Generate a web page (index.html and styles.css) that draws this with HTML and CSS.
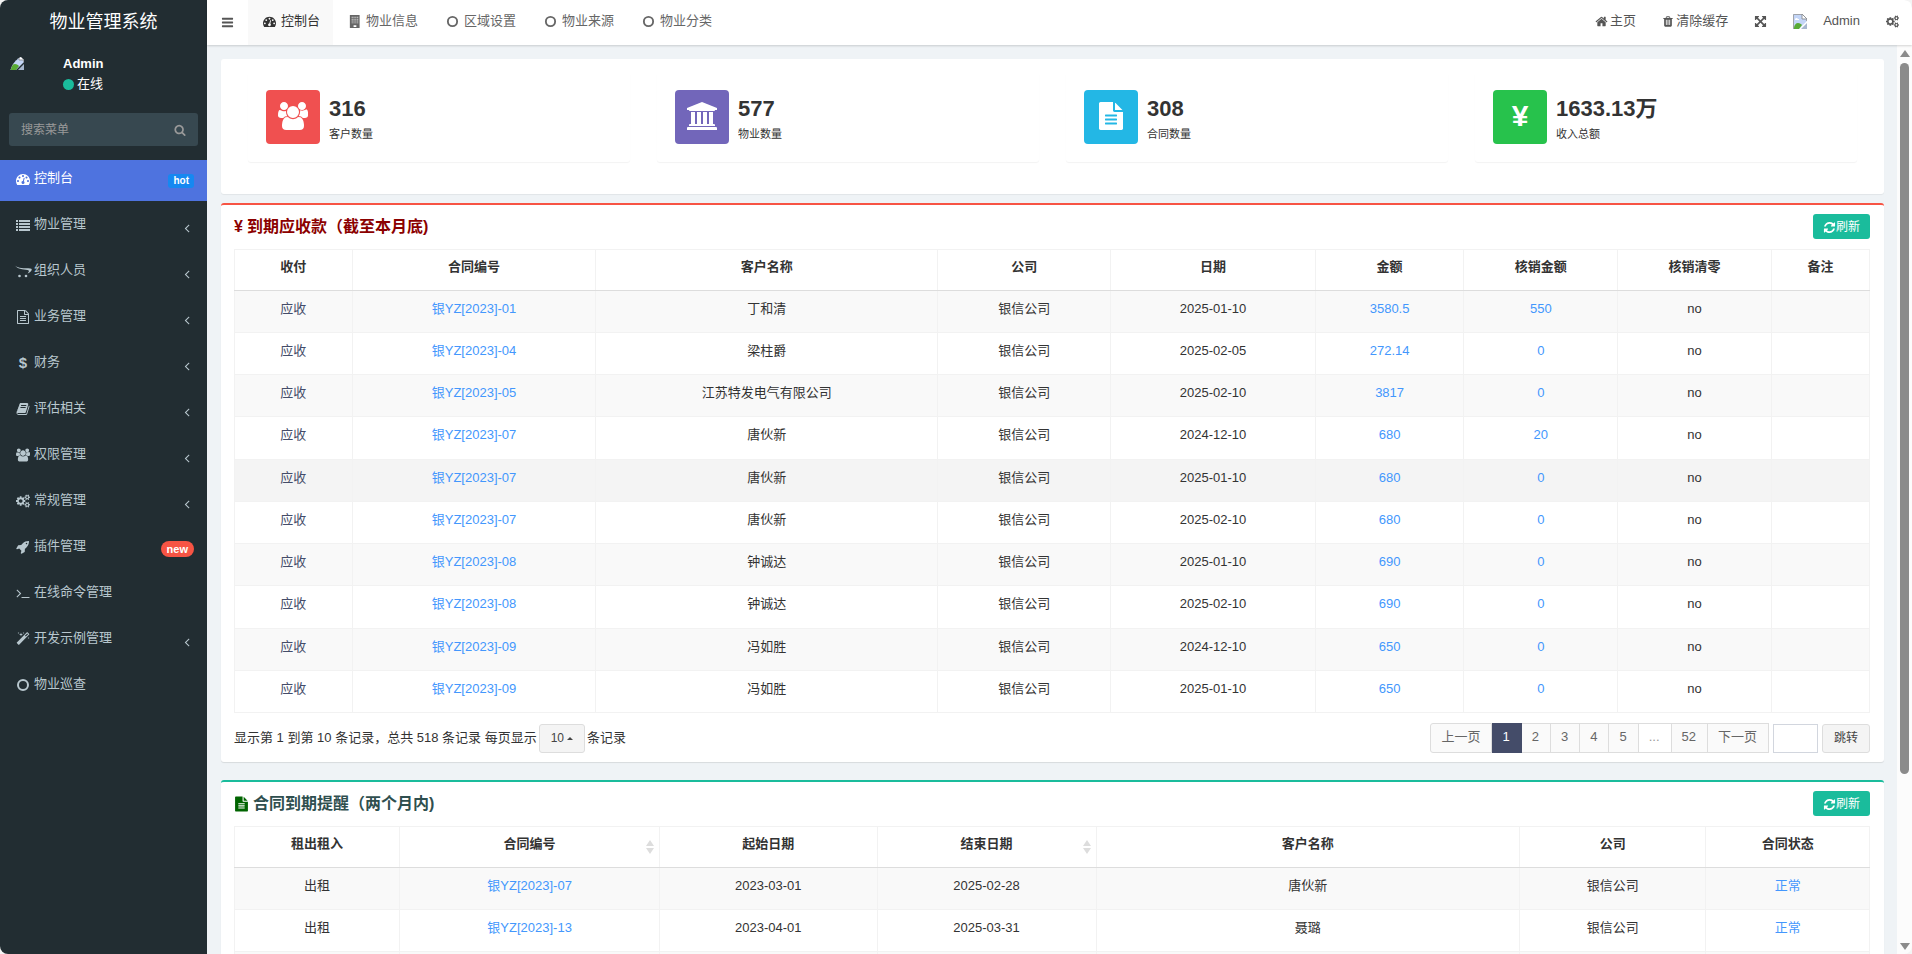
FILE: index.html
```html
<!DOCTYPE html>
<html lang="zh-CN">
<head>
  <meta charset="UTF-8">
  <meta name="viewport" content="width=device-width, initial-scale=1.0">
  <title>物业管理系统</title>
  <link rel="stylesheet" href="styles.css">
</head>
<body>

<svg class="sprite" aria-hidden="true">
  <symbol id="i-bars" viewBox="0 0 1792 1792"><path d="M1664 1344v128q0 26-19 45t-45 19h-1408q-26 0-45-19t-19-45v-128q0-26 19-45t45-19h1408q26 0 45 19t19 45zm0-512v128q0 26-19 45t-45 19h-1408q-26 0-45-19t-19-45v-128q0-26 19-45t45-19h1408q26 0 45 19t19 45zm0-512v128q0 26-19 45t-45 19h-1408q-26 0-45-19t-19-45v-128q0-26 19-45t45-19h1408q26 0 45 19t19 45z"/></symbol>
  <symbol id="i-home" viewBox="0 0 1792 1792"><path d="M1472 992v480q0 26-19 45t-45 19h-384v-384h-256v384h-384q-26 0-45-19t-19-45v-480q0-1 .5-3t.5-3l575-474 575 474q1 2 1 6zm223-69l-62 74q-8 9-21 11h-3q-13 0-21-7l-692-577-692 577q-12 8-24 7-13-2-21-11l-62-74q-8-10-7-23.5t11-21.5l719-599q32-26 76-26t76 26l244 204v-195q0-14 9-23t23-9h192q14 0 23 9t9 23v408l219 182q10 8 11 21.5t-7 23.5z"/></symbol>
  <symbol id="i-search" viewBox="0 0 1792 1792"><path d="M1216 832q0-185-131.5-316.5t-316.5-131.5-316.5 131.5-131.5 316.5 131.5 316.5 316.5 131.5 316.5-131.5 131.5-316.5zm512 832q0 52-38 90t-90 38q-54 0-90-38l-343-342q-179 124-399 124-143 0-273.5-55.5t-225-150-150-225-55.5-273.5 55.5-273.5 150-225 225-150 273.5-55.5 273.5 55.5 225 150 150 225 55.5 273.5q0 220-124 399l343 343q37 37 37 90z"/></symbol>
  <symbol id="i-angle" viewBox="0 0 1792 1792"><path d="M1203 544q0 13-10 23l-393 393 393 393q10 10 10 23t-10 23l-50 50q-10 10-23 10t-23-10l-466-466q-10-10-10-23t10-23l466-466q10-10 23-10t23 10l50 50q10 10 10 23z"/></symbol>
  <symbol id="i-cogs" viewBox="0 0 1920 1792"><path d="M896 896q0-106-75-181t-181-75-181 75-75 181 75 181 181 75 181-75 75-181zm768 512q0-52-38-90t-90-38-90 38-38 90q0 53 37.5 90.5t90.5 37.5 90.5-37.5 37.5-90.5zm0-1024q0-52-38-90t-90-38-90 38-38 90q0 53 37.5 90.5t90.5 37.5 90.5-37.5 37.5-90.5zm-384 421v185q0 10-7 19.5t-16 10.5l-155 24q-11 35-32 76 34 48 90 115 7 11 7 20 0 12-7 19-23 30-82.5 89.5t-78.5 59.5q-11 0-21-7l-115-90q-37 19-77 31-11 108-23 155-7 24-30 24h-186q-11 0-20-7.5t-10-17.5l-23-153q-34-10-75-31l-118 89q-7 7-20 7-11 0-21-8-144-133-144-160 0-9 7-19 10-14 41-53t47-61q-23-44-35-82l-152-24q-10-1-17-9.5t-7-19.5v-185q0-10 7-19.5t16-10.5l155-24q11-35 32-76-34-48-90-115-7-11-7-20 0-12 7-20 22-30 82-89t79-59q11 0 21 7l115 90q34-18 77-32 11-108 23-154 7-24 30-24h186q11 0 20 7.5t10 17.5l23 153q34 10 75 31l118-89q8-7 20-7 11 0 21 8 144 133 144 160 0 8-7 19-12 16-42 54t-45 60q23 48 34 82l152 23q10 2 17 10.5t7 19.5zm640 533v140q0 16-149 31-12 27-30 52 51 113 51 138 0 4-4 7-122 71-124 71-8 0-46-47t-52-68q-20 2-30 2t-30-2q-14 21-52 68t-46 47q-2 0-124-71-4-3-4-7 0-25 51-138-18-25-30-52-149-15-149-31v-140q0-16 149-31 13-29 30-52-51-113-51-138 0-4 4-7 4-2 35-20t59-34 30-16q8 0 46 46.5t52 67.5q20-2 30-2t30 2q51-71 92-112l6-2q4 0 124 70 4 3 4 7 0 25-51 138 17 23 30 52 149 15 149 31zm0-1024v140q0 16-149 31-12 27-30 52 51 113 51 138 0 4-4 7-122 71-124 71-8 0-46-47t-52-68q-20 2-30 2t-30-2q-14 21-52 68t-46 47q-2 0-124-71-4-3-4-7 0-25 51-138-18-25-30-52-149-15-149-31v-140q0-16 149-31 13-29 30-52-51-113-51-138 0-4 4-7 4-2 35-20t59-34 30-16q8 0 46 46.5t52 67.5q20-2 30-2t30 2q51-71 92-112l6-2q4 0 124 70 4 3 4 7 0 25-51 138 17 23 30 52 149 15 149 31z"/></symbol>
  <symbol id="i-dashboard" viewBox="0 0 1792 1792"><path d="M384 1152q0-53-37.5-90.5t-90.5-37.5-90.5 37.5-37.5 90.5 37.5 90.5 90.5 37.5 90.5-37.5 37.5-90.5zm192-448q0-53-37.5-90.5t-90.5-37.5-90.5 37.5-37.5 90.5 37.5 90.5 90.5 37.5 90.5-37.5 37.5-90.5zm428 481l101-382q6-26-7.5-48.5t-38.5-29.5-48 6.5-30 39.5l-101 382q-60 5-107 43.5t-63 98.5q-20 77 20 146t117 89 146-20 89-117q16-60-6-117t-72-91zm660-33q0-53-37.5-90.5t-90.5-37.5-90.5 37.5-37.5 90.5 37.5 90.5 90.5 37.5 90.5-37.5 37.5-90.5zm-640-640q0-53-37.5-90.5t-90.5-37.5-90.5 37.5-37.5 90.5 37.5 90.5 90.5 37.5 90.5-37.5 37.5-90.5zm448 192q0-53-37.5-90.5t-90.5-37.5-90.5 37.5-37.5 90.5 37.5 90.5 90.5 37.5 90.5-37.5 37.5-90.5zm320 448q0 261-141 483-19 29-54 29h-1402q-35 0-54-29-141-221-141-483 0-182 71-348t191-286 286-191 348-71 348 71 286 191 191 286 71 348z"/></symbol>
  <symbol id="i-list" viewBox="0 0 14 14"><path d="M0 2h2v2H0zM3 2h11v2H3zM0 5h2v2H0zM3 5h11v2H3zM0 8h2v2H0zM3 8h11v2H3zM0 11h2v2H0zM3 11h11v2H3z"/></symbol>
  <symbol id="i-opencart" viewBox="0 0 18 14"><path d="M0 0.500C2 3 5 4.200 12 4.200C16 4.200 18.500 4.300 17.600 6.200C17 7.600 15 8.800 13.600 9.500C15 7.700 15.800 6.300 13.500 5.900C9 5.200 3 5.300 0 0.500z"/><circle cx="5.500" cy="12" r="1.300"/><circle cx="12" cy="12" r="1.300"/></symbol>
  <symbol id="i-file" viewBox="0 0 1792 1792"><path d="M1152 512v-472q22 14 36 28l408 408q14 14 28 36h-472zm-128 32q0 40 28 68t68 28h544v1056q0 40-28 68t-68 28h-1344q-40 0-68-28t-28-68v-1600q0-40 28-68t68-28h800v544zm256 864v-64q0-14-9-23t-23-9h-704q-14 0-23 9t-9 23v64q0 14 9 23t23 9h704q14 0 23-9t9-23zm0-256v-64q0-14-9-23t-23-9h-704q-14 0-23 9t-9 23v64q0 14 9 23t23 9h704q14 0 23-9t9-23zm0-256v-64q0-14-9-23t-23-9h-704q-14 0-23 9t-9 23v64q0 14 9 23t23 9h704q14 0 23-9t9-23z"/></symbol>
  <symbol id="i-file-o" viewBox="0 0 1792 1792"><path d="M1596 380q28 28 48 76t20 88v1152q0 40-28 68t-68 28h-1344q-40 0-68-28t-28-68v-1600q0-40 28-68t68-28h896q40 0 88 20t76 48zm-444-244v376h376q-10-29-22-41l-313-313q-12-12-41-22zm384 1528v-1024h-416q-40 0-68-28t-28-68v-416h-768v1536h1280zm-1024-864q0-14 9-23t23-9h704q14 0 23 9t9 23v64q0 14-9 23t-23 9h-704q-14 0-23-9t-9-23v-64zm736 224q14 0 23 9t9 23v64q0 14-9 23t-23 9h-704q-14 0-23-9t-9-23v-64q0-14 9-23t23-9h704zm0 256q14 0 23 9t9 23v64q0 14-9 23t-23 9h-704q-14 0-23-9t-9-23v-64q0-14 9-23t23-9h704z"/></symbol>
  <symbol id="i-book" viewBox="0 0 1792 1792"><path d="M1703 478q40 57 18 129l-275 906q-19 64-76.5 107.5t-122.5 43.5h-923q-77 0-148.5-53.5t-99.5-131.5q-24-67-2-127 0-4 3-27t4-37q1-8-3-21.5t-3-19.5q2-11 8-21t16.500-23.500 16.500-23.500q23-38 45-91.500t30-91.500q3-10 .5-30t-.5-28q3-11 17-28t17-23q21-36 42-92t25-90q1-9-2.500-32t.5-28q4-13 22-30.500t22-22.500q19-26 42.500-84.500t27.500-96.500q1-8-3-25.500t-2-26.500q2-8 9-18t18-23 17-21q8-12 16.500-30.500t15-35 16-36 19.500-32 26.500-23.500 36-11.500 47.500 5.500l-1 3q38-9 51-9h761q74 0 114 56t18 130l-274 906q-36 119-71.500 153.500t-128.500 34.500h-869q-27 0-38 15-11 16-1 43 24 70 144 70h923q29 0 56-15.500t35-41.500l300-987q7-22 5-57 38 15 59 43zm-1064 2q-4 13 2 22.500t20 9.500h608q13 0 25.500-9.500t16.500-22.500l21-64q4-13-2-22.500t-20-9.500h-608q-13 0-25.500 9.500t-16.500 22.500zm-83 256q-4 13 2 22.500t20 9.500h608q13 0 25.500-9.500t16.500-22.500l21-64q4-13-2-22.500t-20-9.500h-608q-13 0-25.500 9.500t-16.500 22.500z"/></symbol>
  <symbol id="i-users" viewBox="0 0 1920 1792"><path d="M593 896q-162 5-265 128h-134q-82 0-138-40.5t-56-118.5q0-353 124-353 6 0 43.5 21t97.5 42.5 119 21.5q67 0 133-23-5 37-5 66 0 159 92 299zm1071 637q0 120-73 189.5t-194 69.5h-874q-121 0-194-69.5t-73-189.5q0-53 3.5-103.5t14-109 26.5-108.5 43-97.5 62-81 85.5-53.5 111.5-20q10 0 43 21.5t73 48 107 48 135 21.5 135-21.5 107-48 73-48 43-21.5q61 0 111.5 20t85.5 53.5 62 81 43 97.5 26.5 108.5 14 109 3.5 103.5zm-1024-1277q0 106-75 181t-181 75-181-75-75-181 75-181 181-75 181 75 75 181zm704 384q0 159-112.5 271.5t-271.5 112.5-271.5-112.5-112.5-271.5 112.5-271.5 271.5-112.5 271.5 112.5 112.5 271.5zm576 225q0 78-56 118.5t-138 40.5h-134q-103-123-265-128 92-140 92-299 0-29-5-66 66 23 133 23 59 0 119-21.5t97.5-42.5 43.5-21q124 0 124 353zm-128-609q0 106-75 181t-181 75-181-75-75-181 75-181 181-75 181 75 75 181z"/></symbol>
  <symbol id="i-rocket" viewBox="0 0 1792 1792"><path d="M1440 448q0-40-28-68t-68-28-68 28-28 68 28 68 68 28 68-28 28-68zm224-288q0 249-75.5 430.5t-253.5 360.5q-81 80-195 176l-20 379q-2 16-16 26l-384 224q-7 4-16 4-12 0-23-9l-64-64q-13-14-8-32l85-276-281-281-276 85q-3 1-9 1-14 0-23-9l-64-64q-17-19-5-39l224-384q10-14 26-16l379-20q96-114 176-195 188-187 358-258t431-71q14 0 24 9.5t10 22.5z"/></symbol>
  <symbol id="i-terminal" viewBox="0 0 1792 1792"><path d="M649 983l-466 466q-10 10-23 10t-23-10l-50-50q-10-10-10-23t10-23l393-393-393-393q-10-10-10-23t10-23l50-50q10-10 23-10t23 10l466 466q10 10 10 23t-10 23zm1079 457v64q0 14-9 23t-23 9h-960q-14 0-23-9t-9-23v-64q0-14 9-23t23-9h960q14 0 23 9t9 23z"/></symbol>
  <symbol id="i-magic" viewBox="0 0 1792 1792"><path d="M1254 581l293-293-107-107-293 293zm447-293q0 27-18 45l-1286 1286q-18 18-45 18t-45-18l-198-198q-18-18-18-45t18-45l1286-1286q18-18 45-18t45 18l198 198q18 18 18 45zm-1351-190l98 30-98 30-30 98-30-98-98-30 98-30 30-98zm350 162l196 60-196 60-60 196-60-196-196-60 196-60 60-196zm930 478l98 30-98 30-30 98-30-98-98-30 98-30 30-98zm-640-640l98 30-98 30-30 98-30-98-98-30 98-30 30-98z"/></symbol>
  <symbol id="i-circle" viewBox="0 0 14 14"><circle cx="7" cy="7" r="5" fill="none" stroke="currentColor" stroke-width="2"/></symbol>
  <symbol id="i-building" viewBox="0 0 14 14"><path fill-rule="evenodd" d="M2 0h10.500v14H2zM4 2v1h1V2zM6 2v1h1V2zM8 2v1h1V2zM10 2v1h1V2zM4 4v1h1V4zM6 4v1h1V4zM8 4v1h1V4zM10 4v1h1V4zM4 6v1h1V6zM6 6v1h1V6zM8 6v1h1V6zM10 6v1h1V6zM4 8v1h1V8zM6 8v1h1V8zM8 8v1h1V8zM10 8v1h1V8zM6 11v2h3v-2z"/></symbol>
  <symbol id="i-trash" viewBox="0 0 1792 1792"><path d="M704 1376v-704q0-14-9-23t-23-9h-64q-14 0-23 9t-9 23v704q0 14 9 23t23 9h64q14 0 23-9t9-23zm256 0v-704q0-14-9-23t-23-9h-64q-14 0-23 9t-9 23v704q0 14 9 23t23 9h64q14 0 23-9t9-23zm256 0v-704q0-14-9-23t-23-9h-64q-14 0-23 9t-9 23v704q0 14 9 23t23 9h64q14 0 23-9t9-23zm-544-992h448l-48-117q-7-9-17-11h-317q-10 2-17 11zm928 32v64q0 14-9 23t-23 9h-96v948q0 83-47 143.5t-113 60.5h-832q-66 0-113-58.5t-47-141.5v-952h-96q-14 0-23-9t-9-23v-64q0-14 9-23t23-9h309l70-167q15-37 54-63t79-26h320q40 0 79 26t54 63l70 167h309q14 0 23 9t9 23z"/></symbol>
  <symbol id="i-arrows" viewBox="0 0 1792 1792"><path d="M1411 541l-355 355 355 355 144-144q29-31 70-14 39 17 39 59v448q0 26-19 45t-45 19h-448q-42 0-59-40-17-39 14-69l144-144-355-355-355 355 144 144q31 30 14 69-17 40-59 40h-448q-26 0-45-19t-19-45v-448q0-42 40-59 39-17 69 14l144 144 355-355-355-355-144 144q-19 19-45 19-12 0-24-5-40-17-40-59v-448q0-26 19-45t45-19h448q42 0 59 40 17 39-14 69l-144 144 355 355 355-355-144-144q-31-30-14-69 17-40 59-40h448q26 0 45 19t19 45v448q0 42-39 59-13 5-25 5-26 0-45-19z"/></symbol>
  <symbol id="i-refresh" viewBox="0 0 1792 1792"><path d="M1639 1056q0 5-1 7-64 268-268 434.5t-478 166.5q-146 0-282.5-55t-243.5-157l-129 129q-19 19-45 19t-45-19-19-45v-448q0-26 19-45t45-19h448q26 0 45 19t19 45-19 45l-137 137q71 66 161 102t187 36q134 0 250-65t186-179q11-17 53-117 8-23 30-23h192q13 0 22.5 9.5t9.5 22.5zm25-800v448q0 26-19 45t-45 19h-448q-26 0-45-19t-19-45 19-45l138-138q-148-137-349-137-134 0-250 65t-186 179q-11 17-53 117-8 23-30 23h-199q-13 0-22.5-9.5t-9.5-22.5v-7q65-268 270-434.5t480-166.5q146 0 284 55.5t245 156.5l130-129q19-19 45-19t45 19 19 45z"/></symbol>
  <symbol id="i-bank" viewBox="0 0 1920 1792"><path d="M960 0l960 384v128h-128q0 26-20.5 45t-48.5 19h-1526q-28 0-48.5-19t-20.5-45h-128v-128zm-704 640h256v768h128v-768h256v768h128v-768h256v768h128v-768h256v768h59q28 0 48.5 19t20.5 45v64h-1664v-64q0-26 20.5-45t48.5-19h59v-768zm1595 960q28 0 48.5 19t20.5 45v128h-1920v-128q0-26 20.5-45t48.5-19h1782z"/></symbol>
  <symbol id="i-sort" viewBox="0 0 8 14"><path d="M4 0l4 6H0zM0 8h8l-4 6z"/></symbol>
  <symbol id="i-photo" viewBox="0 0 14 15"><path d="M0 0h9l5 5v2L6 15H0z" fill="#c3d5f7"/><path d="M.5 15V.5H9L13.500 5v2" fill="none" stroke="#a0a4aa"/><path d="M9 0v5h5z" fill="#fff" stroke="#8f9399"/><path d="M2 5c1-1.500 2.500-1 3 0h1v1H2z" fill="#fff"/><path d="M1 14c0-3 2-5 4-5s3 1 4 2l-3 4H1z" fill="#58aa35"/><path d="M14 9v6H8z" fill="#a7b7cf"/></symbol>
</svg>

<div class="app">
  <aside class="sidebar">
    <h1 class="logo">物业管理系统</h1>
    <div class="user-panel">
      <span class="avatar"><svg class="photo"><use href="#i-photo"/></svg></span>
      <div class="user-info">
        <strong>Admin</strong>
        <span class="online"><i class="dot"></i>在线</span>
      </div>
    </div>
    <form class="menu-search">
      <input type="text" aria-label="搜索菜单" placeholder="搜索菜单">
      <button type="button" aria-label="搜索"><svg class="ico"><use href="#i-search"/></svg></button>
    </form>
    <nav class="menu">
      <a href="#" class="active"><svg class="ico"><use href="#i-dashboard"/></svg><span>控制台</span><small class="label">hot</small></a>
      <a href="#"><svg class="ico"><use href="#i-list"/></svg><span>物业管理</span><svg class="arrow"><use href="#i-angle"/></svg></a>
      <a href="#"><svg class="ico wide"><use href="#i-opencart"/></svg><span>组织人员</span><svg class="arrow"><use href="#i-angle"/></svg></a>
      <a href="#"><svg class="ico"><use href="#i-file-o"/></svg><span>业务管理</span><svg class="arrow"><use href="#i-angle"/></svg></a>
      <a href="#"><b class="ico">$</b><span>财务</span><svg class="arrow"><use href="#i-angle"/></svg></a>
      <a href="#"><svg class="ico"><use href="#i-book"/></svg><span>评估相关</span><svg class="arrow"><use href="#i-angle"/></svg></a>
      <a href="#"><svg class="ico"><use href="#i-users"/></svg><span>权限管理</span><svg class="arrow"><use href="#i-angle"/></svg></a>
      <a href="#"><svg class="ico"><use href="#i-cogs"/></svg><span>常规管理</span><svg class="arrow"><use href="#i-angle"/></svg></a>
      <a href="#"><svg class="ico"><use href="#i-rocket"/></svg><span>插件管理</span><small class="label badge">new</small></a>
      <a href="#"><svg class="ico"><use href="#i-terminal"/></svg><span>在线命令管理</span></a>
      <a href="#"><svg class="ico"><use href="#i-magic"/></svg><span>开发示例管理</span><svg class="arrow"><use href="#i-angle"/></svg></a>
      <a href="#"><svg class="ico"><use href="#i-circle"/></svg><span>物业巡查</span></a>
    </nav>
  </aside>

  <div class="main">
    <header class="topbar">
      <button type="button" class="toggle" aria-label="切换菜单"><svg class="ico"><use href="#i-bars"/></svg></button>
      <nav class="tabs">
        <a href="#" class="active"><svg class="ico"><use href="#i-dashboard"/></svg>控制台</a>
        <a href="#"><svg class="ico"><use href="#i-building"/></svg>物业信息</a>
        <a href="#"><svg class="ico"><use href="#i-circle"/></svg>区域设置</a>
        <a href="#"><svg class="ico"><use href="#i-circle"/></svg>物业来源</a>
        <a href="#"><svg class="ico"><use href="#i-circle"/></svg>物业分类</a>
      </nav>
      <nav class="tools">
        <a href="#"><svg class="ico"><use href="#i-home"/></svg>主页</a>
        <a href="#"><svg class="ico trash"><use href="#i-trash"/></svg>清除缓存</a>
        <a href="#" aria-label="全屏"><svg class="ico"><use href="#i-arrows"/></svg></a>
        <a href="#" class="account"><svg class="photo"><use href="#i-photo"/></svg>Admin</a>
        <a href="#" aria-label="设置"><svg class="ico"><use href="#i-cogs"/></svg></a>
      </nav>
    </header>

    <div class="viewport">
      <main class="content">
        <section class="stats">
          <div class="stat">
            <span class="stat-icon red"><svg><use href="#i-users"/></svg></span>
            <div><h3>316</h3><p>客户数量</p></div>
          </div>
          <div class="stat">
            <span class="stat-icon purple"><svg><use href="#i-bank"/></svg></span>
            <div><h3>577</h3><p>物业数量</p></div>
          </div>
          <div class="stat">
            <span class="stat-icon blue"><svg><use href="#i-file"/></svg></span>
            <div><h3>308</h3><p>合同数量</p></div>
          </div>
          <div class="stat">
            <span class="stat-icon green">¥</span>
            <div><h3>1633.13万</h3><p>收入总额</p></div>
          </div>
        </section>

        <section class="box danger">
          <div class="box-header">
            <h2><span>¥</span>到期应收款（截至本月底)</h2>
            <button type="button" class="btn-refresh"><svg class="ico"><use href="#i-refresh"/></svg>刷新</button>
          </div>
          <table class="receivable">
            <thead>
              <tr><th>收付</th><th>合同编号</th><th>客户名称</th><th>公司</th><th>日期</th><th>金额</th><th>核销金额</th><th>核销清零</th><th>备注</th></tr>
            </thead>
            <tbody>
              <tr><td>应收</td><td><a href="#">银YZ[2023]-01</a></td><td>丁和清</td><td>银信公司</td><td>2025-01-10</td><td><a href="#">3580.5</a></td><td><a href="#">550</a></td><td>no</td><td></td></tr>
              <tr><td>应收</td><td><a href="#">银YZ[2023]-04</a></td><td>梁柱爵</td><td>银信公司</td><td>2025-02-05</td><td><a href="#">272.14</a></td><td><a href="#">0</a></td><td>no</td><td></td></tr>
              <tr><td>应收</td><td><a href="#">银YZ[2023]-05</a></td><td>江苏特发电气有限公司</td><td>银信公司</td><td>2025-02-10</td><td><a href="#">3817</a></td><td><a href="#">0</a></td><td>no</td><td></td></tr>
              <tr><td>应收</td><td><a href="#">银YZ[2023]-07</a></td><td>唐伙新</td><td>银信公司</td><td>2024-12-10</td><td><a href="#">680</a></td><td><a href="#">20</a></td><td>no</td><td></td></tr>
              <tr class="hover"><td>应收</td><td><a href="#">银YZ[2023]-07</a></td><td>唐伙新</td><td>银信公司</td><td>2025-01-10</td><td><a href="#">680</a></td><td><a href="#">0</a></td><td>no</td><td></td></tr>
              <tr><td>应收</td><td><a href="#">银YZ[2023]-07</a></td><td>唐伙新</td><td>银信公司</td><td>2025-02-10</td><td><a href="#">680</a></td><td><a href="#">0</a></td><td>no</td><td></td></tr>
              <tr><td>应收</td><td><a href="#">银YZ[2023]-08</a></td><td>钟诚达</td><td>银信公司</td><td>2025-01-10</td><td><a href="#">690</a></td><td><a href="#">0</a></td><td>no</td><td></td></tr>
              <tr><td>应收</td><td><a href="#">银YZ[2023]-08</a></td><td>钟诚达</td><td>银信公司</td><td>2025-02-10</td><td><a href="#">690</a></td><td><a href="#">0</a></td><td>no</td><td></td></tr>
              <tr><td>应收</td><td><a href="#">银YZ[2023]-09</a></td><td>冯如胜</td><td>银信公司</td><td>2024-12-10</td><td><a href="#">650</a></td><td><a href="#">0</a></td><td>no</td><td></td></tr>
              <tr><td>应收</td><td><a href="#">银YZ[2023]-09</a></td><td>冯如胜</td><td>银信公司</td><td>2025-01-10</td><td><a href="#">650</a></td><td><a href="#">0</a></td><td>no</td><td></td></tr>
            </tbody>
          </table>
          <div class="table-footer">
            <div class="page-info">
              <span>显示第 1 到第 10 条记录，总共 518 条记录 每页显示</span>
              <button type="button" class="btn page-size">10<i class="caret"></i></button>
              <span>条记录</span>
            </div>
            <div class="pager">
              <nav class="pages">
                <a href="#">上一页</a><a href="#" class="active">1</a><a href="#">2</a><a href="#">3</a><a href="#">4</a><a href="#">5</a><a href="#" class="disabled">...</a><a href="#">52</a><a href="#">下一页</a>
              </nav>
              <input type="text" aria-label="页码">
              <button type="button" class="btn">跳转</button>
            </div>
          </div>
        </section>

        <section class="box success">
          <div class="box-header">
            <h2><svg class="ico"><use href="#i-file"/></svg>合同到期提醒（两个月内)</h2>
            <button type="button" class="btn-refresh"><svg class="ico"><use href="#i-refresh"/></svg>刷新</button>
          </div>
          <table class="contracts">
            <thead>
              <tr><th>租出租入</th><th>合同编号<svg class="sort"><use href="#i-sort"/></svg></th><th>起始日期</th><th>结束日期<svg class="sort"><use href="#i-sort"/></svg></th><th>客户名称</th><th>公司</th><th>合同状态</th></tr>
            </thead>
            <tbody>
              <tr><td>出租</td><td><a href="#">银YZ[2023]-07</a></td><td>2023-03-01</td><td>2025-02-28</td><td>唐伙新</td><td>银信公司</td><td><a href="#">正常</a></td></tr>
              <tr><td>出租</td><td><a href="#">银YZ[2023]-13</a></td><td>2023-04-01</td><td>2025-03-31</td><td>聂璐</td><td>银信公司</td><td><a href="#">正常</a></td></tr>
              <tr><td></td><td></td><td></td><td></td><td></td><td></td><td></td></tr>
            </tbody>
          </table>
        </section>
      </main>
      <div class="scrollbar" aria-hidden="true">
        <i class="up"></i><i class="thumb"></i><i class="down"></i>
      </div>
    </div>
  </div>
</div>

</body>
</html>
```
FILE: styles.css
```css
* { box-sizing: border-box; }
body {
  margin: 0; background: #f4f4f4; color: #333; font-size: 13px; line-height: 18px;
  font-family: "Liberation Sans", "Noto Sans CJK SC", sans-serif;
}
h1, h2, h3, p { margin: 0; }
a { color: #4397fd; text-decoration: none; }
button, input { font: inherit; }
button { cursor: pointer; }
svg { fill: currentColor; display: block; flex: none; }
.sprite { width: 0; height: 0; position: absolute; }
.ico { width: 13px; height: 13px; flex: none; }
.photo { width: 14px; height: 15px; }

.app { display: flex; height: 100vh; overflow: hidden; border-radius: 8px; }

/* sidebar */
.sidebar { width: 207px; flex: none; background: #222d32; color: #fff; }
.logo { height: 45px; line-height: 44px; font-size: 18px; font-weight: normal; text-align: center; }
.user-panel { display: flex; padding: 10px 10px 19px; gap: 8px; }
.avatar { width: 45px; height: 39px; overflow: hidden; border-radius: 22px; }
.user-info { display: flex; flex-direction: column; gap: 2px; }
.online { display: flex; align-items: center; gap: 3px; }
.dot { width: 11px; height: 11px; border-radius: 50%; background: #1abc9c; }
.menu-search {
  display: flex; align-items: center; height: 33px; margin: 0 9px 14px; padding: 0 12px;
  background: #374850; border-radius: 3px; color: #999;
}
.menu-search input { flex: 1; min-width: 0; padding: 0; border: 0; outline: 0; background: none; color: #fff; font-size: 12px; }
.menu-search input::placeholder { color: #999; }
.menu-search button { padding: 0; border: 0; background: none; color: #999; }
.menu-search .ico { width: 12px; height: 12px; }
.menu { display: flex; flex-direction: column; gap: 5px; }
.menu a { display: flex; align-items: flex-start; gap: 4px; height: 41px; padding: 9px 13px 0 16px; color: #b8c7ce; }
.menu a.active { background: #4e73df; color: #fff; }
.menu .ico { width: 14px; height: 14px; margin-top: 3px; text-align: center; line-height: 14px; }
.menu .wide { width: 18px; margin: 3px -2px 0; }
.menu b.ico { font-size: 15px; }
.menu span { flex: 1; }
.arrow { width: 14px; height: 14px; margin-top: 6px; }
.label { margin-top: 5px; padding: 0 5px; background: #1688f1; border-radius: 3px; color: #fff; font-size: 10px; font-weight: bold; line-height: 14px; }
.badge { margin-top: 4px; padding: 0 6px; background: #f75444; border-radius: 8px; font-size: 11px; line-height: 16px; }

/* top bar */
.main { flex: 1; min-width: 0; display: flex; flex-direction: column; }
.topbar { display: flex; flex: none; height: 45px; background: #fff; color: #555; box-shadow: 0 1px 2px rgba(0,0,0,.16); z-index: 1; }
.toggle { width: 41px; padding: 0 0 0 14px; border: 0; background: none; color: #555; }
.tabs { display: flex; flex: 1; }
.tabs a { display: flex; align-items: center; gap: 5px; padding: 0 13px 3px 15px; color: #666; }
.tabs a.active { background: #f9f9f9; color: #333; }
.tools { display: flex; gap: 26px; padding: 0 13px 3px 0; }
.tools a { display: flex; align-items: center; gap: 2px; color: #555; }
.tools .trash { width: 12px; }
.tools .account { gap: 16px; }

/* content */
.viewport { display: flex; flex: 1; min-height: 0; }
.content { flex: 1; min-width: 0; padding: 14px 13px 0 14px; overflow: hidden; background: #eff3f6; }
.stats { display: flex; gap: 27px; margin-bottom: 9px; padding: 13px 27px 32px; background: #fff; border-radius: 3px; box-shadow: 0 1px 1px rgba(0,0,0,.06); }
.stat { display: flex; flex: 1; gap: 9px; padding: 18px; border-radius: 3px; box-shadow: 0 1px 1px rgba(0,0,0,.05); }
.stat-icon {
  display: flex; align-items: center; justify-content: center; width: 54px; height: 54px; padding-bottom: 2px;
  border-radius: 4px; color: #fff; font-size: 30px; font-weight: bold;
}
.stat-icon svg { width: 30px; height: 28px; }
.red { background: #f05050; }
.purple { background: #7266ba; }
.blue { background: #23b7e5; }
.green { background: #27c24c; }
.stat h3 { padding-top: 5px; font-size: 22px; line-height: 28px; }
.stat p { padding-top: 2px; font-size: 11px; }

.box { margin-bottom: 18px; padding: 0 14px 9px 13px; background: #fff; border-top: 2px solid #d2d6de; border-radius: 3px; box-shadow: 0 1px 1px rgba(0,0,0,.1); }
.danger { border-top-color: #f75444; }
.success { border-top-color: #1abc9c; }
.box-header { display: flex; justify-content: space-between; align-items: flex-start; padding: 9px 0; }
.box-header h2 { display: flex; align-items: center; gap: 4px; font-size: 16px; line-height: 26px; color: #8b0000; }
.success h2 { color: #2f4f4f; }
.box-header h2 .ico { width: 15px; height: 16px; color: #006400; }
.btn-refresh {
  display: flex; align-items: center; height: 25px; padding: 1px 10px 0; border: 0; border-radius: 3px;
  background: #1abc9c; color: #fff; font-size: 12px;
}

table { width: 100%; table-layout: fixed; border-collapse: collapse; }
th, td { position: relative; height: 42px; padding: 7px 8px 13px; border: 1px solid #f2f2f2; text-align: center; }
th { height: 41px; border-bottom-color: #ddd; }
tbody tr:nth-child(4n) td { height: 43px; }
tbody tr:nth-child(odd) { background: #f9f9f9; }
tbody tr.hover { background: #f4f4f4; }
.receivable td:first-child { color: #444c69; }
.receivable th:nth-child(1) { width: 7.2%; }
.receivable th:nth-child(2) { width: 14.9%; }
.receivable th:nth-child(3) { width: 20.9%; }
.receivable th:nth-child(4) { width: 10.6%; }
.receivable th:nth-child(5) { width: 12.5%; }
.receivable th:nth-child(6) { width: 9.1%; }
.receivable th:nth-child(7), .receivable th:nth-child(8) { width: 9.4%; }
.contracts th:nth-child(1) { width: 10.1%; }
.contracts th:nth-child(2) { width: 15.9%; }
.contracts th:nth-child(3) { width: 13.3%; }
.contracts th:nth-child(4) { width: 13.4%; }
.contracts th:nth-child(5) { width: 25.9%; }
.contracts th:nth-child(6) { width: 11.4%; }
.sort { position: absolute; right: 5px; top: 13px; width: 8px; height: 14px; color: #ddd; }

.table-footer { display: flex; justify-content: space-between; padding-top: 10px; }
.page-info { display: flex; align-items: center; gap: 2px; }
.pager { display: flex; align-items: center; gap: 4px; }
.btn { height: 29px; padding: 0 11px; border: 1px solid #ddd; border-radius: 3px; background: #f4f4f4; color: #444; font-size: 12px; }
.page-size { display: flex; align-items: center; gap: 3px; }
.caret { border: 3px solid transparent; border-top: 0; border-bottom-color: #444; }
.pages { display: flex; }
.pages a { height: 30px; padding: 3px 11px 0 10px; border: 1px solid #ddd; border-left-width: 0; background: #fafafa; color: #666; line-height: 20px; }
.pages a:first-child { border-left-width: 1px; border-radius: 3px 0 0 3px; }
.pages a.active { background: #444c69; border-color: #444c69; color: #fff; }
.pages a.disabled { background: #fff; color: #999; }
.pager input { width: 45px; height: 29px; border: 1px solid #d2d6de; }

.scrollbar { display: flex; flex-direction: column; align-items: center; width: 15px; padding: 5px 0 4px; background: #fcfcfc; }
.up { border: 5px solid transparent; border-top: 0; border-bottom: 7px solid #8b8b8b; }
.thumb { width: 9px; height: 79%; margin: 6px 0 auto; border-radius: 5px; background: #8b8b8b; }
.down { border: 5px solid transparent; border-bottom: 0; border-top: 7px solid #8b8b8b; }
```
